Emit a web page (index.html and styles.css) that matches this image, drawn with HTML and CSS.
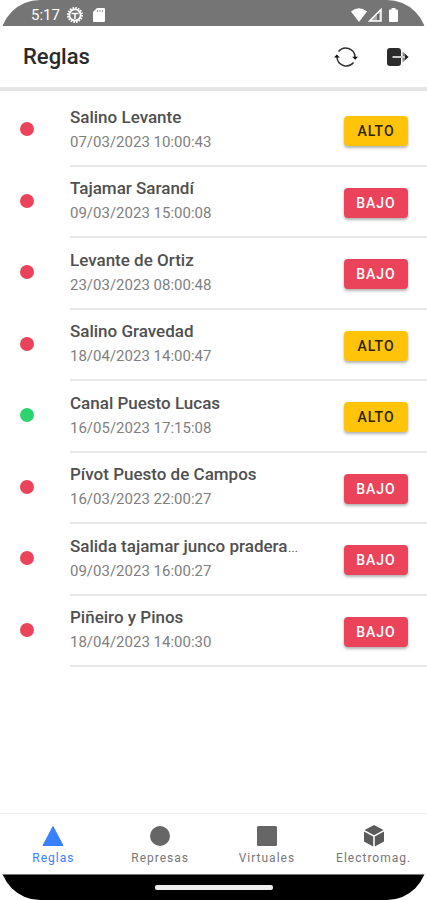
FILE: index.html
```html
<!DOCTYPE html>
<html lang="es">
<head>
<meta charset="utf-8">
<meta name="viewport" content="width=device-width, initial-scale=1">
<title>Reglas</title>
<link rel="stylesheet" href="styles.css">
</head>
<body>
<div class="phone">
  <div class="status">
    <span class="clock">5:17</span>
    <svg width="16" height="16" viewBox="0 0 16 16"><circle cx="8" cy="8" r="7" fill="none" stroke="#fff" stroke-width="2" stroke-dasharray="1.6 1.15"/><circle cx="8" cy="8" r="5.6" fill="none" stroke="#fff" stroke-width="1.8"/><path d="M4.500 6.500h7M8 6.500V12" stroke="#fff" stroke-width="1.6"/></svg>
    <svg class="card" width="12" height="14" viewBox="0 0 12 14"><path d="M4 0h7q1 0 1 1v12q0 1-1 1H1q-1 0-1-1V4z" fill="#fff"/><path d="M4.5 2v2M7 2v2M9.5 2v2" stroke="#999"/></svg>
    <span class="spacer"></span>
    <svg width="16" height="14" viewBox="0 0 16 14"><path d="M0 3.5Q8-3 16 3.5L8 14z" fill="#fff"/></svg>
    <svg width="14" height="14" viewBox="0 0 14 14"><path d="M13 1.5V13H1.5z" fill="#aaa" stroke="#fff" stroke-width="1.5"/><path d="M10 6v6" stroke="#666" stroke-width="2"/></svg>
    <svg class="battery" width="9" height="14" viewBox="0 0 9 14"><path d="M2.500 0h4v1.500h1.500q1 0 1 1V13q0 1-1 1H1q-1 0-1-1V2.500q0-1 1-1h1.500z" fill="#fff"/></svg>
  </div>
  <header class="toolbar">
    <h1>Reglas</h1>
    <button class="tool" aria-label="Actualizar"><svg width="24" height="24" viewBox="0 0 24 24"><path d="M2.800 11.500V11M4.500 6.500A9.300 9.300 0 0 1 21 12M3 12A9.300 9.300 0 0 0 19.500 17.500" fill="none" stroke="#333" stroke-width="1.500"/><path d="M0 12.500 2.800 9.500l3 3zM18.200 11.800h5.800l-2.800 3z" fill="#111"/></svg></button>
    <button class="tool" aria-label="Salir"><svg width="24" height="24" viewBox="0 0 24 24"><rect x="1" y="3" width="14" height="18" rx="3" fill="#2c2c2c"/><path d="M16.500 6.500 22.500 12l-6 5.500z" fill="#888"/><path d="M6.500 12H19" stroke="#ccc" stroke-width="2.200"/><path d="M19 9 22.500 12 19 15z" fill="#222"/></svg></button>
  </header>
  <main>
    <ul class="rules">
      <li><span class="dot"></span><div class="row"><div class="info"><h2>Salino Levante</h2><p>07/03/2023 10:00:43</p></div><button class="level high">ALTO</button></div></li>
      <li><span class="dot"></span><div class="row"><div class="info"><h2>Tajamar Sarandí</h2><p>09/03/2023 15:00:08</p></div><button class="level">BAJO</button></div></li>
      <li><span class="dot"></span><div class="row"><div class="info"><h2>Levante de Ortiz</h2><p>23/03/2023 08:00:48</p></div><button class="level">BAJO</button></div></li>
      <li><span class="dot"></span><div class="row"><div class="info"><h2>Salino Gravedad</h2><p>18/04/2023 14:00:47</p></div><button class="level high">ALTO</button></div></li>
      <li><span class="dot on"></span><div class="row"><div class="info"><h2>Canal Puesto Lucas</h2><p>16/05/2023 17:15:08</p></div><button class="level high">ALTO</button></div></li>
      <li><span class="dot"></span><div class="row"><div class="info"><h2>Pívot Puesto de Campos</h2><p>16/03/2023 22:00:27</p></div><button class="level">BAJO</button></div></li>
      <li><span class="dot"></span><div class="row"><div class="info"><h2>Salida tajamar junco pradera<span class="more">…</span></h2><p>09/03/2023 16:00:27</p></div><button class="level">BAJO</button></div></li>
      <li><span class="dot"></span><div class="row"><div class="info"><h2>Piñeiro y Pinos</h2><p>18/04/2023 14:00:30</p></div><button class="level">BAJO</button></div></li>
    </ul>
  </main>
  <nav class="tabs">
    <a class="active" href="#reglas"><svg width="22" height="22" viewBox="0 0 22 22"><path d="M11 1.500 21 20.500H1z" fill="currentColor" stroke="currentColor" stroke-linejoin="round"/></svg>Reglas</a>
    <a href="#represas"><svg width="22" height="22" viewBox="0 0 22 22"><circle cx="11" cy="11" r="10" fill="#666"/></svg>Represas</a>
    <a href="#virtuales"><svg width="22" height="22" viewBox="0 0 22 22"><rect x="1" y="1" width="20" height="20" rx="1.500" fill="#666"/></svg>Virtuales</a>
    <a href="#electromag"><svg width="22" height="22" viewBox="0 0 22 22"><path d="M11 0 20.500 5 11 10.300 1.500 5zM1 6.600l9.200 5V21.500L1 16.500zM21 6.600l-9.200 5V21.500L21 16.500z" fill="#5a5a5a"/></svg>Electromag.</a>
  </nav>
  <div class="gesture"><span></span></div>
</div>
</body>
</html>
```

FILE: styles.css
```css
* {
  box-sizing: border-box;
}

body {
  margin: 0;
  background: #fff;
  font-family: Roboto, "Liberation Sans", sans-serif;
}

h1, h2, p, ul {
  margin: 0;
  padding: 0;
}

button {
  border: 0;
  font-family: inherit;
}

svg {
  display: block;
}

.phone {
  display: flex;
  flex-direction: column;
  min-height: 100vh;
  overflow: hidden;
  border-radius: 40px;
  background: #fff;
}

.status {
  display: flex;
  align-items: center;
  height: 26px;
  padding: 3px 29px 0 31px;
  background: #757575;
  color: #fff;
}

.clock {
  margin-right: 7px;
  font-size: 15px;
  font-weight: 400;
}

.card {
  margin-left: 10px;
}

.spacer {
  flex: 1;
}

.status svg:nth-of-type(3) {
  margin-right: 1px;
}

.battery {
  margin-left: 7px;
}

.toolbar {
  display: flex;
  align-items: center;
  gap: 28px;
  height: 65px;
  padding: 0 17px 0 23px;
  border-bottom: 4px solid #e6e6e6;
}

.toolbar h1 {
  flex: 1;
  font-size: 22px;
  font-weight: 500;
  color: #2a2a2a;
}

.tool {
  padding: 0;
  background: none;
}

main {
  flex: 1;
  padding-top: 4px;
}

.rules {
  display: grid;
  grid-auto-rows: 1fr;
  min-height: 572px;
  list-style: none;
}

.rules li {
  display: flex;
  align-items: center;
}

.dot {
  width: 14px;
  height: 14px;
  margin: 0 36px 3px 20px;
  border-radius: 50%;
  background: #eb445a;
}

.dot.on {
  background: #2dd36f;
}

.row {
  display: flex;
  flex: 1;
  align-items: center;
  align-self: stretch;
  min-width: 0;
  padding-right: 19px;
  border-bottom: 2px solid #e8e8e8;
}

.info {
  flex: 1;
  min-width: 0;
}

.info h2 {
  font-size: 17px;
  font-weight: 500;
  line-height: 25px;
  color: #505050;
  white-space: nowrap;
}

.info .more {
  font-weight: 300;
}

.info p {
  font-size: 15px;
  line-height: 25px;
  color: #808080;
}

.level {
  width: 64px;
  height: 30px;
  margin-top: 3px;
  padding: 0;
  border-radius: 4px;
  background: #eb445a;
  box-shadow: 0 2px 3px rgba(0, 0, 0, .3);
  color: #fff;
  font-size: 14px;
  font-weight: 500;
  letter-spacing: 1px;
}

.level.high {
  background: #ffc409;
  color: #2c2300;
}

.tabs {
  display: grid;
  grid-template-columns: repeat(4, 1fr);
  height: 61px;
  padding-top: 11px;
  border-top: 1px solid #eee;
}

.tabs a {
  display: flex;
  flex-direction: column;
  align-items: center;
  gap: 2px;
  color: #777;
  font-size: 12px;
  line-height: 18px;
  letter-spacing: 1px;
  text-decoration: none;
}

.tabs .active {
  color: #3880ff;
}

.gesture {
  display: flex;
  justify-content: center;
  align-items: center;
  height: 26px;
  border-top: 1px solid #777;
  background: #000;
}

.gesture span {
  width: 118px;
  height: 5px;
  border-radius: 2px;
  background: #eee;
}
```
